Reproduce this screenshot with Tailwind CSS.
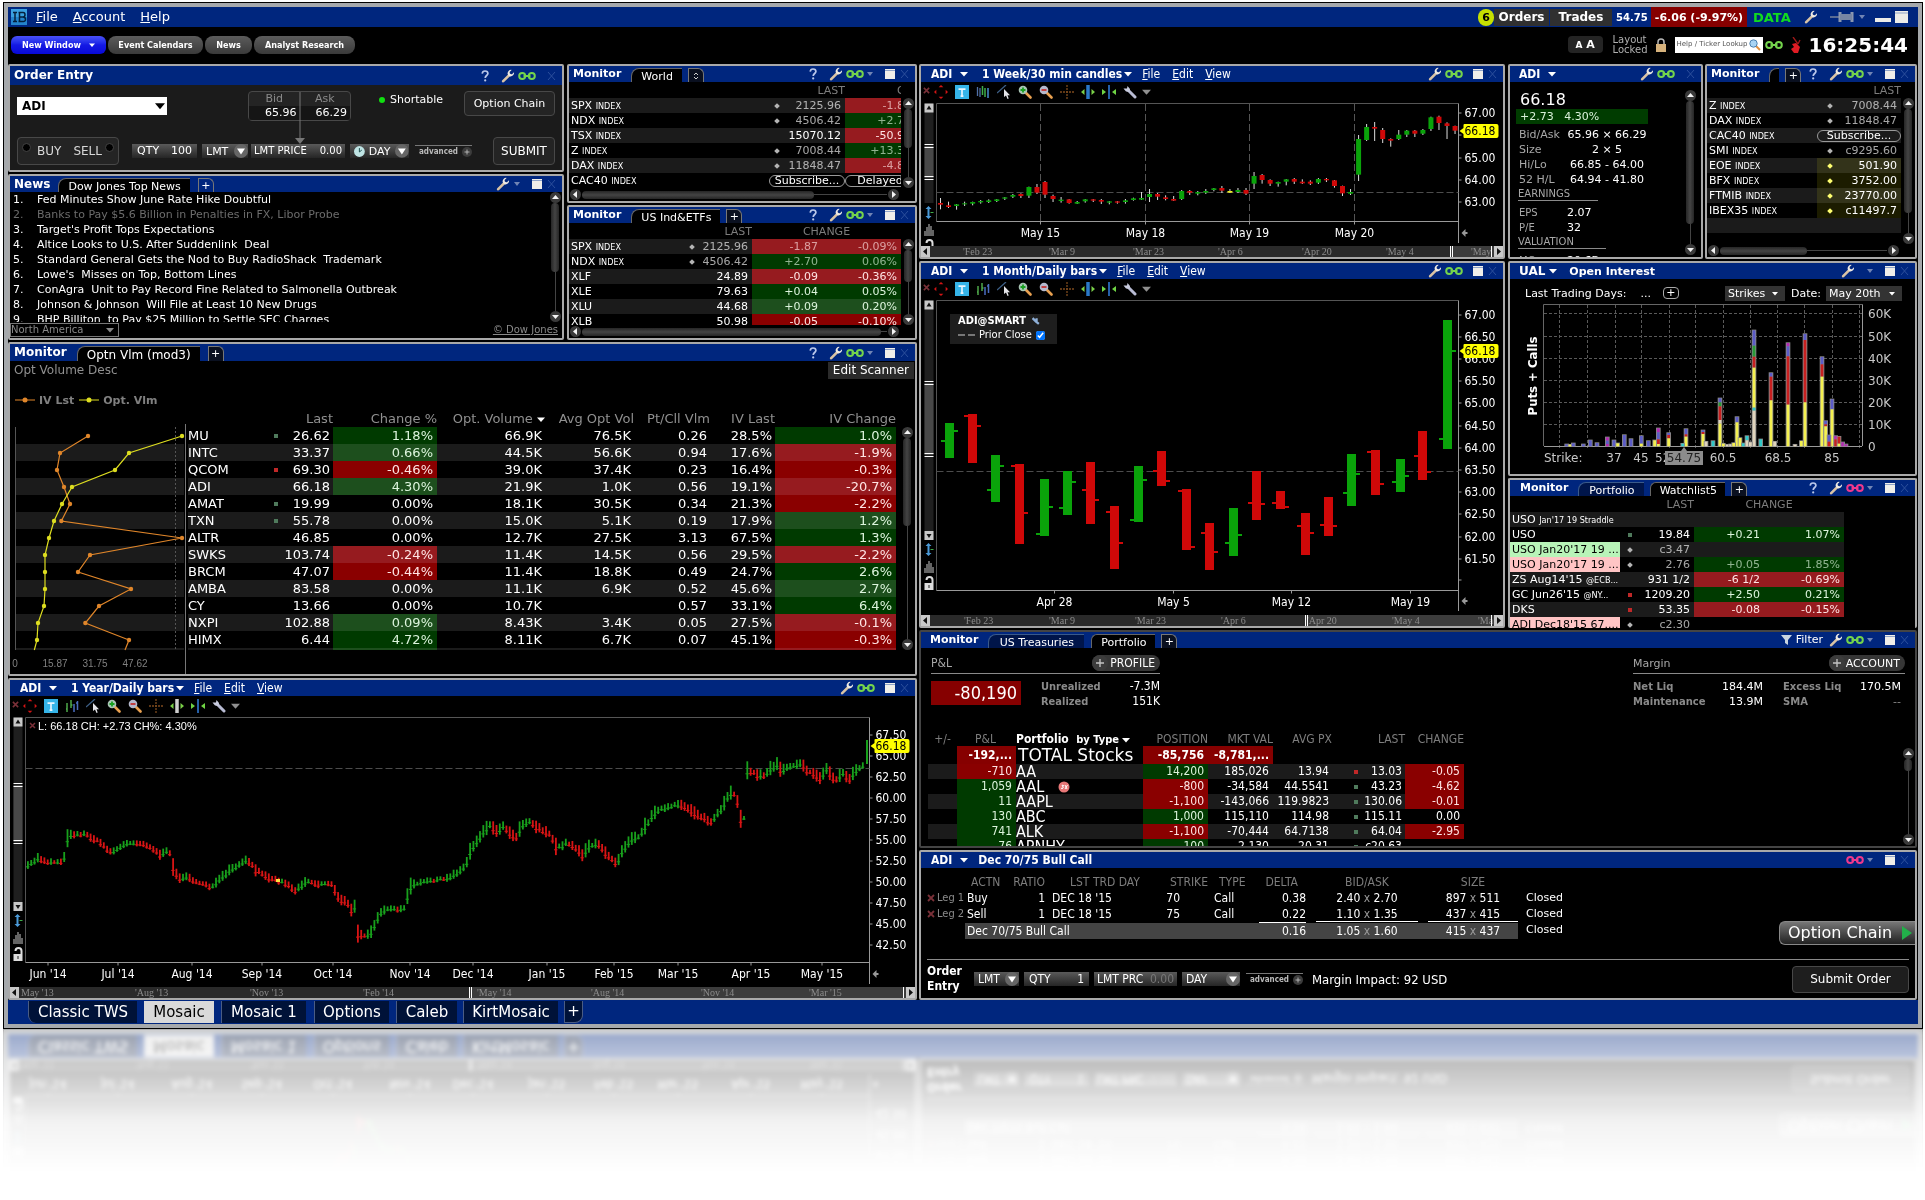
<!DOCTYPE html>
<html lang="en">
<head>
  <meta charset="UTF-8" />
  <meta name="viewport" content="width=device-width, initial-scale=1.0" />
  <title>Mosaic</title>
  <script src="https://cdn.jsdelivr.net/npm/@tailwindcss/browser@4"></script>
</head>
<body class="min-h-screen overflow-x-hidden bg-white pt-[2px] pr-[2px] pl-[3px] text-[11px] leading-[15px] text-white [font-family:'DejaVu_Sans',sans-serif]">

  <!-- ICONS -->
  <svg class="hidden">
    <symbol id="i-wrench" viewBox="0 0 14 14">
      <path d="M2.2 12.2 8.5 5.8" stroke="#d9c3a5" stroke-width="2.6" stroke-linecap="round" />
      <path d="M13 3.2 11 5.3 8.9 4.9 8.6 3 10.6.9A3.6 3.6 0 0 0 6.6 5 3.4 3.4 0 0 0 9 7.4 3.6 3.6 0 0 0 13 3.2z" fill="#eeeae4" />
    </symbol>
    <symbol id="i-link" viewBox="0 0 18 10">
      <circle cx="4.2" cy="5" r="3" fill="none" stroke="currentColor" stroke-width="2" />
      <circle cx="13.8" cy="5" r="3" fill="none" stroke="currentColor" stroke-width="2" />
      <path d="M5.5 5h7" stroke="currentColor" stroke-width="2" />
    </symbol>
    <symbol id="i-menu" viewBox="0 0 8 8"><path d="M1 2h6L4 6z" fill="#7185b5" /></symbol>
    <symbol id="i-max" viewBox="0 0 10 10"><path d="M0 0h10v10H0z" fill="#f0eeea" /><path d="M0 1.5h10" stroke="#8fa3c8" /></symbol>
    <symbol id="i-close" viewBox="0 0 10 10"><path d="M2 1l7 8M9 1 2 9" stroke="#2c4f9c" /></symbol>
    <symbol id="i-help" viewBox="0 0 10 12"><path d="M2.2 3.6C2.4 1.8 3.6 1 5 1c1.7 0 2.9 1 2.9 2.5C7.9 5.5 5.2 5.6 5.2 8" fill="none" stroke="#b9c7ea" stroke-width="1.7" /><circle cx="5.2" cy="10.4" r="1.1" fill="#b9c7ea" /></symbol>
    <symbol id="i-down" viewBox="0 0 8 6"><path d="M0 1h8L4 5.5z" fill="currentColor" /></symbol>
    <symbol id="i-x" viewBox="0 0 8 8"><path d="M1 1l6 6M7 1 1 7" stroke="#7a3038" stroke-width="1.8" /></symbol>
    <symbol id="i-move" viewBox="0 0 12 12"><path d="M6 0l2 2H4zM6 12l2-2H4zM0 6l2-2v4zM12 6l-2-2v4z" fill="#d41414" /></symbol>
    <symbol id="i-text" viewBox="0 0 12 12"><path d="M0 0h12v12H0z" fill="#35b4e8" /><path d="M3 3.5h6M6 3.5v6M4.8 9.5h2.4" stroke="#e8f6ff" stroke-width="1.4" /></symbol>
    <symbol id="i-bars" viewBox="0 0 14 14"><path d="M2 4v9M1 10h1M6 1v8M6 6h1.5" stroke="#4ea84a" stroke-width="1.5" /><path d="M9 5v8M12.5 2v9M11 4h1.5" stroke="#4a6cc0" stroke-width="1.5" /></symbol>
    <symbol id="i-bars2" viewBox="0 0 14 14"><path d="M1.5 2v9M4 3v9" stroke="#5070a8" stroke-width="1.3" /><path d="M6.5 1v9M9 3v9" stroke="#3fae4a" stroke-width="1.5" /><path d="M12 3v10" stroke="#4a8fd0" stroke-width="1.5" /></symbol>
    <symbol id="i-cursor" viewBox="0 0 14 14"><path d="M0 8 9 0" stroke="#3d5f86" stroke-width="1.3" /><path d="M7 4v8l2-1.5L10.5 14l1.2-.5-1.2-3.2H13z" fill="#e4e4e8" /></symbol>
    <symbol id="i-zin" viewBox="0 0 14 14"><path d="M8 8l4.5 4.5" stroke="#e8a050" stroke-width="2.6" stroke-linecap="round" /><circle cx="5" cy="5" r="4.3" fill="#a9c4b4" /><path d="M5 2.5v5M2.5 5h5" stroke="#18a020" stroke-width="1.8" /></symbol>
    <symbol id="i-zout" viewBox="0 0 14 14"><path d="M8 8l4.5 4.5" stroke="#e8a050" stroke-width="2.6" stroke-linecap="round" /><circle cx="5" cy="5" r="4.3" fill="#b4b8cc" /><path d="M2.5 5h5" stroke="#c43030" stroke-width="1.8" /></symbol>
    <symbol id="i-cross" viewBox="0 0 14 14"><path d="M7 0v14M0 7h14" stroke="#7d4a1c" stroke-width="1.3" stroke-dasharray="2 1" /></symbol>
    <symbol id="i-spread" viewBox="0 0 14 14"><path d="M7 0v14" stroke="currentColor" stroke-width="3.5" /><path d="M3.5 4v6L0 7zM10.5 4v6L14 7z" fill="#7ad048" /></symbol>
    <symbol id="i-squeeze" viewBox="0 0 14 14"><path d="M7 0v14" stroke="#2560a8" stroke-width="2" /><path d="M0 4v6l4-3zM14 4v6l-4-3z" fill="#6fd444" /></symbol>
    <symbol id="i-spanner" viewBox="0 0 14 14"><path d="M5 5l7 7" stroke="#b9bcd4" stroke-width="3" stroke-linecap="round" /><path d="M.5 3.5 3 6.5l3.5.5L7 4 4.5 1 4 3.5z" fill="#c9ccdf" /></symbol>
    <symbol id="i-up-circle" viewBox="0 0 11 11"><circle cx="5.5" cy="5.5" r="5.5" fill="#3a3a3a" /><path d="M5.5 3 9 7H2z" fill="#f4f4f4" /></symbol>
    <symbol id="i-drop" viewBox="0 0 14 14"><circle cx="7" cy="7" r="7" fill="#666" /><path d="M3 4.5h8L7 10.5z" fill="#fff" /></symbol>
    <symbol id="i-plus" viewBox="0 0 12 12"><circle cx="6" cy="6" r="6" fill="#3c3c3c" /><path d="M6 3v6M3 6h6" stroke="#c4c4c4" /></symbol>
  </svg>

  <div class="border border-black [-webkit-box-reflect:below_0px_linear-gradient(transparent_86%,rgba(0,0,0,0.05)_91%,rgba(0,0,0,0.26)_97%,rgba(0,0,0,0.42)_100%)]">
    <div class="border-4 border-[#a6a9ac] bg-black">

      <!-- TITLE BAR -->
      <header class="flex h-5 items-center bg-[#00267e] pl-[3px]">
        <svg class="h-4 w-4" viewBox="0 0 16 16"><path d="M0 0h16v16H0z" fill="#3aa0e0" /><path d="M0 8h16v8H0z" fill="#2484cc" /><path d="M2 3.5h4M4 3.5v9M2 12.5h4M8.5 3.5v9M7.5 3.5H12q2 0 2 2.200T12 8H9M12 8q2.500 0 2.500 2.300T12 12.500H7.500" fill="none" stroke="#04203c" stroke-width="1.5" /></svg>
        <nav class="ml-[9px] flex gap-[15px] text-[13px] leading-5">
          <button><u>F</u>ile</button>
          <button><u>A</u>ccount</button>
          <button><u>H</u>elp</button>
        </nav>
        <div class="ml-auto flex h-full items-center font-bold">
          <span class="z-10 flex h-[17px] w-4 items-center justify-center rounded-full bg-[#c6e000] text-black">6</span>
          <button class="h-[17px] w-[55px] bg-[#303030] text-[12px] leading-[17px]">Orders</button>
          <button class="ml-px h-[17px] w-[62px] bg-[#303030] text-[12px] leading-[17px]">Trades</button>
          <span class="ml-1 w-[35px] text-[10px]">54.75</span>
          <span class="flex h-full w-24 items-center justify-center bg-[#860000] text-[11px]">-6.06 (-9.97%)</span>
          <span class="ml-[6px] w-[51px] text-[13px] text-[#10dc20]">DATA</span>
          <svg class="h-[14px] w-[14px]"><use href="#i-wrench" /></svg>
          <svg class="ml-3 h-3 w-6" viewBox="0 0 24 12"><path d="M0 6h9" stroke="#5a6c94" stroke-width="2" /><path d="M10 1v10M22 1v10" stroke="#8b97b0" stroke-width="3" /><path d="M10 3h12v6H10z" fill="#7785a3" /></svg>
          <svg class="ml-1 h-2 w-2"><use href="#i-menu" /></svg>
          <span class="mt-[5px] ml-[9px] h-1 w-4 bg-[#ecece8]"></span>
          <svg class="mr-[10px] ml-1 h-3 w-[13px]" viewBox="0 0 13 12"><path d="M0 0h13v12H0z" fill="#ecece8" /><path d="M0 2h13" stroke="#8fa3c8" /></svg>
        </div>
      </header>

      <!-- TOOLBAR -->
      <div class="flex h-[37px] items-center pr-[10px] pb-[2px] pl-[3px]">
        <div class="flex gap-[2px] text-[9px] leading-[18px] font-bold [font-family:'DejaVu_Sans_Condensed','Noto_Sans',sans-serif]">
          <button class="flex h-[18px] w-[95px] items-center justify-center gap-2 rounded-md bg-linear-to-b from-[#4a50f8] via-[#1418e4] to-[#0808d8]">New Window <svg class="h-[6px] w-[6px]"><use href="#i-down" /></svg></button>
          <button class="h-[18px] w-[95px] rounded-lg bg-linear-to-b from-[#5c5c5c] to-[#3a3a3a]">Event Calendars</button>
          <button class="h-[18px] w-[47px] rounded-lg bg-linear-to-b from-[#5c5c5c] to-[#3a3a3a]">News</button>
          <button class="h-[18px] w-[101px] rounded-lg bg-linear-to-b from-[#5c5c5c] to-[#3a3a3a]">Analyst Research</button>
        </div>
        <div class="ml-auto flex items-center">
          <button class="h-[17px] w-[35px] rounded bg-[#242424] text-[11px] leading-[17px] font-bold"><span class="text-[9px]">A</span> A</button>
          <p class="ml-[10px] text-[10px] leading-[10px] text-[#b0b0b0]">Layout<br />Locked</p>
          <svg class="ml-2 h-[14px] w-[10px]" viewBox="0 0 10 14"><path d="M2 7V4a3 3 0 0 1 6 0v3" fill="none" stroke="#b8b8b8" stroke-width="1.5" /><path d="M0 6h10v8H0z" fill="#d6b27c" /></svg>
          <label class="ml-[9px] flex h-4 w-[88px] items-center bg-white">
            <input aria-label="Help / Ticker Lookup" placeholder="Help / Ticker Lookup" class="w-[74px] pl-[2px] text-[7px] text-black placeholder:text-[#555]" />
            <svg class="h-3 w-3" viewBox="0 0 12 12"><path d="M7 7l4 4" stroke="#e09040" stroke-width="2" /><circle cx="4.5" cy="4.5" r="3.7" fill="#a8d4f4" stroke="#4a80b0" /></svg>
          </label>
          <svg class="ml-[2px] h-[10px] w-[18px] text-[#74d44c]"><use href="#i-link" /></svg>
          <svg class="ml-2 h-4 w-[10px]" viewBox="0 0 10 16"><path d="M2 0l5 7M9 3 7 7" stroke="#a01818" stroke-width="1.3" /><path d="M1 7l4-1 4 4-2 6H3L0 12l3-2z" fill="#e01c24" /></svg>
          <time class="ml-2 text-[20px] leading-5 font-bold">16:25:44</time>
        </div>
      </div>

      <main class="grid grid-cols-[minmax(0,909fr)_minmax(0,998fr)] gap-[2px] pr-px">

        <!-- LEFT HALF -->
        <div class="flex flex-col gap-[2px]">
          <div class="grid grid-cols-[minmax(0,556fr)_minmax(0,350fr)] gap-x-[3px]">
            <div class="flex flex-col gap-[2px]">

              <!-- ORDER ENTRY -->
              <section class="rounded-xs border-2 border-[#a9a9a9]">
                <div class="flex h-[19px] items-center bg-[#00267e] pl-1">
                  <h2 class="text-[12px] font-bold">Order Entry</h2>
                  <div class="ml-auto" data-tools="help wrench link gap close"></div>
                </div>
                <div class="h-[85px] bg-[#1b1b1b] px-[7px] pt-[6px]">
                  <div class="flex items-start">
                    <label class="mt-[6px] flex h-[18px] w-[150px] items-center bg-white pr-[2px] text-black">
                      <select aria-label="Symbol" class="flex-1 appearance-none pl-[5px] text-[12px] font-bold"><option>ADI</option></select>
                      <svg class="h-2 w-[10px]" viewBox="0 0 8 6" preserveAspectRatio="none"><path d="M0 1h8L4 5.5z" /></svg>
                    </label>
                    <div class="relative ml-[81px] grid h-[30px] w-[103px] grid-cols-2 rounded border border-[#484848] bg-[#242424] text-center leading-[14px]">
                      <span class="text-[#8a8a8a]">Bid</span><span class="text-[#8a8a8a]">Ask</span>
                      <span class="bg-black/40 pr-[3px] text-right">65.96</span><span class="bg-black/40 pr-[3px] text-right">66.29</span>
                      <!-- price pointer down to the limit field -->
                      <svg class="absolute top-0 left-[46px] h-[52px] w-[10px]" viewBox="0 0 10 52"><path d="M5 0v48" stroke="#777" /><path d="M0 46h10l-5 6z" fill="#777" /></svg>
                    </div>
                    <p class="mt-px ml-[28px] flex items-center gap-[5px]"><i class="h-[6px] w-[6px] rounded-full bg-[#10e010]"></i>Shortable</p>
                    <button class="ml-auto h-[25px] w-[91px] rounded border border-[#484848] bg-[#242424]">Option Chain</button>
                  </div>
                  <div class="mt-4 flex items-center">
                    <div class="flex h-7 w-[102px] justify-between rounded border border-[#484848] bg-[#242424] px-1 text-[12px] text-[#d8d8d8]">
                      <label class="flex items-center gap-[6px]"><input type="radio" name="side" class="mb-2 h-[9px] w-[9px] appearance-none rounded-full border border-[#444] bg-black" />BUY</label>
                      <label class="flex items-center gap-[3px]">SELL<input type="radio" name="side" class="mb-2 h-[9px] w-[9px] appearance-none rounded-full border border-[#444] bg-black" /></label>
                    </div>
                    <label class="ml-[13px] flex h-[14px] w-[65px] justify-between bg-linear-to-b from-[#5a5a5a] to-[#262626] px-[5px] leading-[14px]">QTY <input value="100" class="w-7 text-right" /></label>
                    <label class="ml-[5px] flex h-[14px] w-[46px] items-center bg-linear-to-b from-[#5a5a5a] to-[#262626] pl-1">
                      <select aria-label="Order type" class="flex-1 appearance-none"><option>LMT</option></select>
                      <svg class="h-[14px] w-[14px]"><use href="#i-drop" /></svg>
                    </label>
                    <label class="ml-[3px] flex h-[14px] w-[94px] justify-between bg-linear-to-b from-[#5a5a5a] to-[#262626] px-[3px] text-[10px] leading-[14px]"><span>LMT PRICE</span><input value="0.00" class="w-7 text-right" /></label>
                    <label class="ml-[5px] flex h-[14px] w-[59px] items-center bg-linear-to-b from-[#5a5a5a] to-[#262626] pl-1">
                      <svg class="mr-1 h-[11px] w-[11px]" viewBox="0 0 11 11"><circle cx="5.5" cy="5.5" r="5.5" fill="#bfe4e4" /><path d="M5.5 2v4l2.5-2" fill="none" stroke="#205050" /></svg>
                      <select aria-label="Time in force" class="w-[27px] appearance-none"><option>DAY</option></select>
                      <svg class="h-[14px] w-[14px]"><use href="#i-drop" /></svg>
                    </label>
                    <button class="ml-[6px] flex items-center gap-1 border-t border-[#777] pl-1 text-[8px] leading-[12px] font-bold text-[#bbb] [font-family:'DejaVu_Sans_Condensed','Noto_Sans',sans-serif]">advanced<svg class="h-[10px] w-[10px]"><use href="#i-plus" /></svg></button>
                    <button class="ml-auto h-7 w-[62px] rounded border border-[#484848] bg-[#242424] text-[12px]">SUBMIT</button>
                  </div>
                </div>
              </section>

              <!-- NEWS -->
              <section class="rounded-xs border-2 border-[#a9a9a9]">
                <div class="flex h-4 items-end bg-[#00267e] pl-1">
                  <h2 class="mr-2 text-[12px] leading-4 font-bold">News</h2>
                  <button class="h-[14px] rounded-tl-lg border-t border-l border-[#666] bg-black px-[9px] leading-[15px]">Dow Jones Top News</button>
                  <button class="ml-2 h-[14px] w-4 rounded-tr-md border border-b-0 border-[#777] leading-3">+</button>
                  <div class="ml-auto" data-tools="wrench menu max close"></div>
                </div>
                <div class="flex h-[130px] overflow-hidden">
                  <ol id="news" class="flex-1 pl-[3px]"></ol>
                  <div data-vscroll="64"></div>
                </div>
                <div class="flex h-4 items-center justify-between pr-1 text-[10px] text-[#8a8a8a]">
                  <label class="flex h-[14px] w-[109px] items-center border border-[#777] pr-1">
                    <select aria-label="Region" class="flex-1 appearance-none leading-3"><option>North America</option></select>
                    <svg class="h-[6px] w-2"><use href="#i-down" /></svg>
                  </label>
                  <a href="#" class="leading-[14px] underline">© Dow Jones</a>
                </div>
              </section>
            </div>

            <div class="flex flex-col gap-[2px]">

              <!-- WORLD MONITOR -->
              <section class="rounded-xs border-2 border-[#a9a9a9]">
                <div class="flex h-4 items-end bg-[#00267e] pl-1">
                  <h2 class="mr-[10px] leading-4 font-bold">Monitor</h2>
                  <button class="h-[14px] rounded-tl-lg border-t border-l border-[#666] bg-black px-[9px] leading-[15px]">World</button>
                  <button aria-label="More tabs" class="ml-[6px] flex h-[14px] w-4 items-center justify-center rounded-tr-md border border-b-0 border-[#777] bg-[#0a1020]"><svg class="h-2 w-1" viewBox="0 0 4 8"><path d="M0 3l2-2 2 2M0 5l2 2 2-2" fill="none" stroke="#ccc" /></svg></button>
                  <div class="ml-auto" data-tools="help wrench link menu max close"></div>
                </div>
                <div class="flex h-[106px]">
                  <div class="flex-1 overflow-hidden">
                    <table class="w-[calc(100%+14px)] table-fixed">
                      <colgroup><col /><col class="w-4" /><col class="w-[60px]" /><col class="w-[70px]" /></colgroup>
                      <thead><tr class="h-4 text-right text-[#7d7d7d]"><th></th><th></th><th class="font-normal">LAST</th><th class="pl-[52px] text-left font-normal">CHANGE</th></tr></thead>
                      <tbody id="world"></tbody>
                    </table>
                  </div>
                  <div class="mt-4 flex" data-vscroll="58"></div>
                </div>
                <div class="pr-3" data-hscroll="76"></div>
              </section>

              <!-- US MONITOR -->
              <section class="rounded-xs border-2 border-[#a9a9a9]">
                <div class="flex h-4 items-end bg-[#00267e] pl-1">
                  <h2 class="mr-[10px] leading-4 font-bold">Monitor</h2>
                  <button class="h-[14px] rounded-tl-lg border-t border-l border-[#666] bg-black px-[9px] leading-[15px]">US Ind&amp;ETFs</button>
                  <button class="ml-[6px] h-[14px] w-4 rounded-tr-md border border-b-0 border-[#777] bg-[#0a1020] leading-3">+</button>
                  <div class="ml-auto" data-tools="help wrench link menu max close"></div>
                </div>
                <div class="flex h-[102px] overflow-hidden">
                  <table class="h-fit w-full min-w-0 flex-1 table-fixed">
                    <colgroup><col /><col class="w-4" /><col class="w-[52px]" /><col class="w-[70px]" /><col class="w-[79px]" /></colgroup>
                    <thead><tr class="h-4 text-right text-[#7d7d7d]"><th></th><th></th><th class="font-normal">LAST</th><th colspan="2" class="text-center font-normal">CHANGE</th></tr></thead>
                    <tbody id="us"></tbody>
                  </table>
                  <div class="mt-4 flex" data-vscroll="50"></div>
                </div>
                <div class="pr-3" data-hscroll="98"></div>
              </section>
            </div>
          </div>

          <!-- OPTION VOLUME SCANNER -->
          <section class="rounded-xs border-2 border-[#a9a9a9]">
            <div class="flex h-[17px] items-end bg-[#00267e] pl-1">
              <h2 class="mr-[10px] text-[12px] leading-[17px] font-bold">Monitor</h2>
              <button class="h-[15px] rounded-tl-lg border-t border-l border-[#666] bg-black px-[9px] text-[12px] leading-4">Optn Vlm (mod3)</button>
              <button class="ml-2 h-[15px] w-4 rounded-tr-md border border-b-0 border-[#777] bg-[#0a1020] leading-3">+</button>
              <div class="ml-auto" data-tools="help wrench link menu max close"></div>
            </div>
            <div class="flex h-[29px] items-start justify-between pr-px pl-1 text-[12px]">
              <p class="mt-[2px] text-[#909090]">Opt Volume Desc</p>
              <button class="mt-px h-[17px] bg-[#2b2b2b] px-[5px] text-[12px] leading-[17px]">Edit Scanner</button>
            </div>
            <div class="flex h-5 items-center pl-[5px] font-bold text-[#808080]">
              <svg class="mr-1 h-[6px] w-5" viewBox="0 0 20 6"><path d="M0 3h20" stroke="#e0862a" /><circle cx="10" cy="3" r="2.5" fill="#e0862a" /></svg>IV Lst
              <svg class="mr-1 ml-[5px] h-[6px] w-5" viewBox="0 0 20 6"><path d="M0 3h20" stroke="#dede20" /><circle cx="10" cy="3" r="2.5" fill="#dede20" /></svg>Opt. Vlm
            </div>
            <div class="flex h-[264px] items-start">
              <svg id="scanChart" class="h-[264px] w-[178px] shrink-0 text-[10px] [font-family:'Liberation_Sans',sans-serif]" viewBox="10 411 178 264"></svg>
              <table class="w-full min-w-0 flex-1 table-fixed text-[13px] leading-[17px]">
                <colgroup><col class="w-[80px]" /><col class="w-4" /><col /><col class="w-[104px]" /><col class="w-[108px]" /><col class="w-[89px]" /><col class="w-[76px]" /><col class="w-[65px]" /><col class="w-[121px]" /></colgroup>
                <thead>
                  <tr class="h-[17px] text-right text-[13px] whitespace-nowrap text-[#909090]">
                    <th></th><th></th><th class="font-normal">Last</th><th class="font-normal">Change %</th>
                    <th class="font-normal">Opt. Volume <svg class="mb-px inline h-[7px] w-2 text-white"><use href="#i-down" /></svg></th>
                    <th class="font-normal">Avg Opt Vol</th><th class="font-normal">Pt/Cll Vlm</th><th class="font-normal">IV Last</th><th class="font-normal">IV Change</th>
                  </tr>
                </thead>
                <tbody id="scan"></tbody>
              </table>
              <div class="mt-[17px] mr-px ml-1 flex h-[223px]" data-vscroll="44"></div>
            </div>
          </section>

          <!-- 1 YEAR CHART -->
          <section class="rounded-xs border-2 border-[#a9a9a9]">
            <div data-chart-head="1 Year/Daily bars"></div>
            <svg id="yearChart" class="w-full text-[12px] [font-family:'DejaVu_Sans_Condensed','Noto_Sans',sans-serif]" viewBox="10 716 905 282"></svg>
          </section>
        </div>

        <!-- RIGHT HALF -->
        <div class="flex flex-col gap-[2px]">
          <div class="grid grid-cols-[minmax(0,586fr)_minmax(0,409fr)] gap-x-[3px]">
            <div class="flex flex-col gap-[2px]">
              <section class="rounded-xs border-2 border-[#a9a9a9]">
                <div data-chart-head="1 Week/30 min candles"></div>
                <svg id="weekChart" class="w-full text-[12px] [font-family:'DejaVu_Sans_Condensed','Noto_Sans',sans-serif]" viewBox="921 102 582 155"></svg>
              </section>
              <section class="rounded-xs border-2 border-[#a9a9a9]">
                <div data-chart-head="1 Month/Daily bars"></div>
                <div class="relative">
                  <svg id="monthChart" class="w-full text-[12px] [font-family:'DejaVu_Sans_Condensed','Noto_Sans',sans-serif]" viewBox="921 299 582 327"></svg>
                  <div class="absolute top-[15px] left-[29px] h-[30px] w-[107px] bg-[#1e1e1e] pl-2 leading-[14px] [font-family:'DejaVu_Sans_Condensed','Noto_Sans',sans-serif]">
                    <p class="flex items-center gap-[6px] font-bold">ADI@SMART <svg class="h-2 w-2" viewBox="0 0 14 14"><path d="M1 2l6 6 5 4M8 2v7" stroke="#8fb0d8" stroke-width="4" /></svg></p>
                    <label class="flex items-center gap-1"><svg class="h-[2px] w-[17px]" viewBox="0 0 17 2"><path d="M0 1h7M10 1h7" stroke="#777" stroke-width="2" /></svg>Prior Close <input type="checkbox" checked class="h-[9px] w-[9px]" /></label>
                  </div>
                </div>
              </section>
            </div>

            <div class="flex flex-col gap-[2px]">
              <div class="grid grid-cols-[minmax(0,195fr)_minmax(0,212fr)] gap-x-[2px]">

                <!-- ADI QUOTE -->
                <section class="rounded-xs border-2 border-[#a9a9a9]">
                  <div class="flex h-4 items-center bg-[#00267e] pl-[9px] text-[12px] font-bold [font-family:'DejaVu_Sans_Condensed','Noto_Sans',sans-serif]">
                    <button class="flex items-center gap-2">ADI <svg class="h-[6px] w-2"><use href="#i-down" /></svg></button>
                    <div class="ml-auto" data-tools="wrench link gap close"></div>
                  </div>
                  <div class="flex h-[175px] pt-2">
                    <div class="flex-1 overflow-hidden pl-[6px]">
                      <p class="pl-1 text-[16px] leading-[19px]">66.18</p>
                      <p class="h-[15px] w-[132px] bg-[#003c00] pl-1 whitespace-pre text-[#d8f0d8]">+2.73   4.30%</p>
                      <dl id="quote" class="mt-[3px] grid grid-cols-[48px_80px] pl-[3px] leading-[15px] whitespace-nowrap"></dl>
                      <h3 class="ml-[2px] w-20 border-b border-[#8a8a8a] text-[10px] leading-[13px] text-[#a8a8a8]">EARNINGS</h3>
                      <dl class="mt-1 grid grid-cols-[48px_80px] pl-[3px] leading-[15px]">
                        <dt class="text-[10px] text-[#a8a8a8]">EPS</dt><dd>2.07</dd>
                        <dt class="text-[10px] text-[#a8a8a8]">P/E</dt><dd>32</dd>
                      </dl>
                      <h3 class="ml-[2px] w-[88px] border-b border-[#8a8a8a] text-[10px] leading-[13px] text-[#a8a8a8]">VALUATION</h3>
                      <dl class="mt-1 grid grid-cols-[48px_80px] pl-[3px] leading-[15px]"><dt class="text-[10px] text-[#a8a8a8]">MC</dt><dd>20.6B</dd></dl>
                    </div>
                    <div class="mr-1 flex pb-[2px]" data-vscroll="86"></div>
                  </div>
                </section>

                <!-- INDEX MONITOR -->
                <section class="rounded-xs border-2 border-[#a9a9a9]">
                  <div class="flex h-4 items-end bg-[#00267e] pl-1">
                    <h2 class="mr-[10px] leading-4 font-bold">Monitor</h2>
                    <button aria-label="Tab" class="h-[14px] w-[10px] rounded-tl-lg border-t border-l border-[#666] bg-black"></button>
                    <button class="ml-[6px] h-[14px] w-4 rounded-tr-md border border-b-0 border-[#777] bg-[#0a1020] leading-3">+</button>
                    <div class="ml-auto" data-tools="help wrench link menu max close"></div>
                  </div>
                  <div class="flex h-[162px]">
                    <table class="h-fit w-full min-w-0 flex-1 table-fixed">
                      <colgroup><col /><col class="w-[26px]" /><col class="w-[58px]" /></colgroup>
                      <thead><tr class="h-4 text-right text-[#7d7d7d]"><th></th><th></th><th class="font-normal">LAST</th></tr></thead>
                      <tbody id="idx"></tbody>
                    </table>
                    <div class="mt-4 flex" data-vscroll="84"></div>
                  </div>
                  <div class="pr-3" data-hscroll="52"></div>
                </section>
              </div>

              <!-- OPEN INTEREST -->
              <section class="rounded-xs border-2 border-[#a9a9a9]">
                <div class="flex h-4 items-center bg-[#00267e] pl-[9px]">
                  <button class="mr-3 flex items-center gap-1 text-[12px] font-bold">UAL <svg class="h-[6px] w-2"><use href="#i-down" /></svg></button>
                  <h2 class="text-[11px] font-bold">Open Interest</h2>
                  <div class="ml-auto" data-tools="wrench gap menu max close"></div>
                </div>
                <div class="flex h-6 items-center pt-1 pr-[13px] pl-[15px]">
                  <span>Last Trading Days:</span><span class="ml-[14px]">...</span>
                  <button class="ml-3 h-3 w-4 rounded border border-[#aaa] leading-[10px]">+</button>
                  <label class="ml-auto flex h-[15px] items-center gap-[6px] bg-[#333] px-[3px]"><select aria-label="View by" class="appearance-none"><option>Strikes</option></select><svg class="mr-1 h-[5px] w-[6px]"><use href="#i-down" /></svg></label>
                  <label class="ml-[6px] flex items-center gap-[5px]">Date: <span class="flex h-[15px] items-center gap-2 bg-[#333] px-[3px]"><select class="appearance-none"><option>May 20th</option></select><svg class="mr-1 h-[5px] w-[6px]"><use href="#i-down" /></svg></span></label>
                </div>
                <svg id="oiChart" class="w-full text-[12px]" viewBox="1510 303 405 171"></svg>
              </section>

              <!-- WATCHLIST -->
              <section class="h-[150px] overflow-hidden rounded-xs border-2 border-b-0 border-[#a9a9a9]">
                <div class="flex h-4 items-end bg-[#00267e] pl-[10px]">
                  <h2 class="mr-[10px] leading-4 font-bold">Monitor</h2>
                  <button class="h-[14px] w-[66px] rounded-tl-lg border-t border-l border-[#3a5a8a] bg-[#00154a] leading-[15px]">Portfolio</button>
                  <button class="ml-[6px] h-[14px] w-[75px] rounded-tl-md border-t border-l border-[#666] bg-black leading-[15px]">Watchlist5</button>
                  <button class="ml-[6px] h-[14px] w-4 rounded-tr-md border border-b-0 border-[#777] bg-[#0a1020] leading-3">+</button>
                  <div class="ml-auto text-[#f0388c]" data-tools="help wrench link menu max close"></div>
                </div>
                <table class="mr-[71px] w-[calc(100%-71px)] table-fixed">
                  <colgroup><col class="w-[110px]" /><col /><col class="w-[54px]" /><col class="w-[70px]" /><col class="w-20" /></colgroup>
                  <thead><tr class="h-4 text-right text-[#7d7d7d]"><th></th><th></th><th class="font-normal">LAST</th><th colspan="2" class="text-center font-normal">CHANGE</th></tr></thead>
                  <tbody id="watch"></tbody>
                </table>
              </section>
            </div>
          </div>

          <!-- PORTFOLIO -->
          <section class="rounded-xs border-2 border-[#444] [font-family:'DejaVu_Sans_Condensed','Noto_Sans',sans-serif]">
            <div class="flex h-4 items-end bg-[#00267e] pl-[9px] [font-family:'DejaVu_Sans',sans-serif]">
              <h2 class="mr-[10px] leading-4 font-bold">Monitor</h2>
              <button class="h-[14px] w-[96px] rounded-tl-lg border-t border-l border-[#3a5a8a] bg-[#00154a] leading-[15px]">US Treasuries</button>
              <button class="ml-[7px] h-[14px] w-[64px] rounded-tl-md border-t border-l border-[#666] bg-black leading-[15px]">Portfolio</button>
              <button class="ml-[6px] h-[14px] w-4 rounded-tr-md border border-b-0 border-[#777] bg-[#0a1020] leading-3">+</button>
              <button class="ml-auto flex items-center gap-1 leading-4"><svg class="h-[10px] w-[11px]" viewBox="0 0 11 10"><path d="M0 0h11L7 5v5L4 8V5z" fill="#c8d4e0" /></svg>Filter</button>
              <div class="ml-[6px]" data-tools="wrench link menu max close"></div>
            </div>
            <div class="flex h-[85px] justify-between pt-[7px] pr-[10px] pl-[10px]">
              <div class="w-[229px]">
                <div class="flex h-[19px] items-center justify-between border-b border-[#8a8a8a] pb-[2px]">
                  <span class="text-[12px] text-[#a8a8a8]">P&amp;L</span>
                  <button class="flex items-center gap-[2px] rounded-lg bg-[#363636] pr-[5px] text-[12px] leading-[15px]"><svg class="h-4 w-4"><use href="#i-plus" /></svg>PROFILE</button>
                </div>
                <div class="mt-[5px] flex justify-between">
                  <output class="mt-[2px] h-6 w-[90px] bg-[#860000] pr-1 text-right text-[18px] leading-6">-80,190</output>
                  <dl class="grid w-[119px] grid-cols-2 text-[12px] leading-[15px]">
                    <dt class="text-[11px] font-bold text-[#8a8a8a]">Unrealized</dt><dd class="text-right">-7.3M</dd>
                    <dt class="text-[11px] font-bold text-[#8a8a8a]">Realized</dt><dd class="text-right">151K</dd>
                  </dl>
                </div>
              </div>
              <div class="w-[272px] text-[11px] [font-family:'DejaVu_Sans',sans-serif]">
                <div class="flex h-[19px] items-center justify-between border-b border-[#8a8a8a] pb-[2px]">
                  <span class="text-[#a8a8a8]">Margin</span>
                  <button class="flex items-center gap-px rounded-lg bg-[#363636] pr-[5px] leading-[15px]"><svg class="h-4 w-4"><use href="#i-plus" /></svg>ACCOUNT</button>
                </div>
                <dl class="mt-[5px] grid grid-cols-[80px_50px_85px_53px] leading-[15px]">
                  <dt class="text-[10px] font-bold text-[#8a8a8a]">Net Liq</dt><dd class="text-right">184.4M</dd><dt class="pl-5 text-[10px] font-bold whitespace-nowrap text-[#8a8a8a]">Excess Liq</dt><dd class="text-right">170.5M</dd>
                  <dt class="text-[10px] font-bold text-[#8a8a8a]">Maintenance</dt><dd class="text-right">13.9M</dd><dt class="pl-5 text-[10px] font-bold text-[#8a8a8a]">SMA</dt><dd class="text-right text-[#8a8a8a]">--</dd>
                </dl>
              </div>
            </div>
            <div class="flex h-[113px] overflow-hidden">
              <table class="ml-[7px] h-fit w-[536px] table-fixed text-[12px]">
                <colgroup><col class="w-[29px]" /><col class="w-[59px]" /><col class="w-[127px]" /><col class="w-[65px]" /><col class="w-[65px]" /><col class="w-[59px]" /><col class="w-7" /><col class="w-[45px]" /><col class="w-[59px]" /></colgroup>
                <thead>
                  <tr class="h-[13px] text-right leading-[13px] whitespace-nowrap text-[#7d7d7d]">
                    <th class="text-center font-normal">+/-</th><th class="pr-5 font-normal">P&amp;L</th>
                    <th class="text-left text-white">Portfolio &nbsp;<button class="text-[11px]">by Type <svg class="inline h-[6px] w-2"><use href="#i-down" /></svg></button></th>
                    <th class="font-normal">POSITION</th><th class="font-normal">MKT VAL</th><th class="font-normal">AVG PX</th><th></th><th class="font-normal">LAST</th><th class="font-normal">CHANGE</th>
                  </tr>
                </thead>
                <tbody id="pf"></tbody>
              </table>
              <div class="mt-[15px] ml-auto flex pb-px" data-vscroll="16"></div>
            </div>
          </section>

          <!-- SPREAD TICKET -->
          <section class="rounded-xs border-2 border-[#a9a9a9] [font-family:'DejaVu_Sans_Condensed','Noto_Sans',sans-serif]">
            <div class="flex h-4 items-center bg-[#00267e] pl-[10px] text-[12px] font-bold">
              <button class="flex items-center gap-2">ADI <svg class="h-[6px] w-2"><use href="#i-down" /></svg></button>
              <h2 class="ml-[10px]">Dec 70/75 Bull Call</h2>
              <div class="ml-auto text-[#f0388c]" data-tools="link menu max close"></div>
            </div>
            <div class="flex h-[91px] justify-between pt-[6px]">
              <div class="flex">
                <table class="ml-[6px] h-fit w-[591px] table-fixed text-[12px] leading-4">
                  <colgroup><col class="w-[38px]" /><col class="w-[42px]" /><col class="w-[38px]" /><col class="w-[99px]" /><col class="w-[64px]" /><col class="w-[51px]" /><col class="w-[47px]" /><col class="w-[122px]" /><col class="w-[90px]" /></colgroup>
                  <thead>
                    <tr class="h-4 whitespace-nowrap text-[#7d7d7d]">
                      <th></th><th class="pl-[6px] text-left font-normal">ACTN</th><th class="text-right font-normal">RATIO</th><th class="pl-[25px] text-left font-normal">LST TRD DAY</th><th class="text-right font-normal">STRIKE</th><th class="pl-[11px] text-left font-normal">TYPE</th><th class="pr-2 text-right font-normal">DELTA</th><th class="text-center font-normal">BID/ASK</th><th class="text-center font-normal">SIZE</th>
                    </tr>
                  </thead>
                  <tbody id="legs"></tbody>
                </table>
                <div class="mt-4 ml-2 text-[11px] leading-4 [font-family:'DejaVu_Sans',sans-serif]"><p>Closed</p><p>Closed</p><p>Closed</p></div>
              </div>
              <button class="mt-[47px] flex h-6 w-[136px] items-center justify-between rounded-l-md border border-r-0 border-[#888] bg-linear-to-b from-[#777] to-[#222] pr-[3px] pl-2 text-[16px] leading-5 [font-family:'DejaVu_Sans',sans-serif]">Option Chain <svg class="h-[14px] w-[10px]" viewBox="0 0 10 14"><path d="M0 0l10 7-10 7z" fill="#22b04a" /></svg></button>
            </div>
            <div class="mx-[6px] flex h-[39px] items-center border-t border-[#8a8a8a]">
              <h3 class="w-[47px] text-[12px] leading-[15px] font-bold">Order<br />Entry</h3>
              <label class="flex h-[14px] w-[45px] items-center bg-linear-to-b from-[#5a5a5a] to-[#262626] pl-1 text-[12px]">
                <select aria-label="Order type" class="w-[27px] appearance-none"><option>LMT</option></select><svg class="h-[14px] w-[14px]"><use href="#i-drop" /></svg>
              </label>
              <label class="ml-[5px] flex h-[14px] w-[65px] justify-between bg-linear-to-b from-[#5a5a5a] to-[#262626] px-[5px] text-[12px] leading-[14px]">QTY <input value="1" class="w-6 text-right" /></label>
              <label class="ml-[5px] flex h-[14px] w-[83px] justify-between bg-linear-to-b from-[#5a5a5a] to-[#262626] px-[3px] text-[12px] leading-[14px]"><span>LMT PRC</span><input value="0.00" class="w-[26px] text-right text-[#777]" /></label>
              <label class="ml-[5px] flex h-[14px] w-[58px] items-center bg-linear-to-b from-[#5a5a5a] to-[#262626] pl-1 text-[12px]">
                <select aria-label="Time in force" class="w-10 appearance-none"><option>DAY</option></select><svg class="h-[14px] w-[14px]"><use href="#i-drop" /></svg>
              </label>
              <button class="ml-[6px] flex items-center gap-1 border-t border-[#777] pl-1 text-[8px] leading-[12px] font-bold text-[#bbb]">advanced<svg class="h-[10px] w-[10px]"><use href="#i-plus" /></svg></button>
              <p class="ml-[9px] text-[13px]">Margin Impact: 92 USD</p>
              <button class="ml-auto h-[27px] w-[117px] rounded border border-[#484848] bg-[#1e1e1e] text-[12px] [font-family:'DejaVu_Sans',sans-serif]">Submit Order</button>
            </div>
          </section>
        </div>
      </main>

      <!-- WORKSPACE TABS -->
      <nav class="flex h-6 items-start bg-[#00267e] pt-px pl-5 text-[15px] leading-[21px]">
        <button class="mr-[7px] h-[22px] w-[109px] rounded-bl-lg border-l border-[#4a5c84] bg-[#001238]">Classic TWS</button>
        <button class="mr-[7px] h-[22px] w-[70px] bg-[#d9d9d9] text-black">Mosaic</button>
        <button class="mr-2 h-[22px] w-[85px] border-l border-[#4a5c84] bg-[#001238]">Mosaic 1</button>
        <button class="mr-[7px] h-[22px] w-[75px] border-l border-[#4a5c84] bg-[#001238]">Options</button>
        <button class="mr-[6px] h-[22px] w-[61px] border-l border-[#4a5c84] bg-[#001238]">Caleb</button>
        <button class="mr-[6px] h-[22px] w-[95px] border-l border-[#4a5c84] bg-[#001238]">KirtMosaic</button>
        <button class="h-[22px] w-[19px] rounded-br-lg border-x border-b border-[#4a5c84] bg-[#001238]">+</button>
      </nav>
    </div>
  </div>
  <!-- softens the mirrored window -->
  <div class="h-[168px] backdrop-blur-[2px]"></div>

  <script>
    const $ = (id) => document.getElementById(id);

    // Header tool icons
    const TOOLS = {
      help: '<svg class="mr-[11px] h-3 w-[10px]"><use href="#i-help"/></svg>',
      wrench: '<svg class="mr-[3px] h-[14px] w-[14px]"><use href="#i-wrench"/></svg>',
      link: '<svg class="mr-[2px] h-[10px] w-[18px]"><use href="#i-link"/></svg>',
      menu: '<svg class="mr-[11px] h-2 w-2"><use href="#i-menu"/></svg>',
      max: '<svg class="mr-1 h-[10px] w-[10px]"><use href="#i-max"/></svg>',
      close: '<svg class="h-[10px] w-[10px]"><use href="#i-close"/></svg>',
      gap: '<span class="w-2"></span>',
    };
    const tools = (list) => list.split(' ').map((t) => TOOLS[t]).join('');

    // Chart headers with menu and drawing toolbar
    const DRAW = ['i-move', 'i-text', 'i-bars', 'i-cursor', 'i-zin', 'i-zout', 'i-cross', 'i-spread', 'i-squeeze', 'i-spanner'];
    document.querySelectorAll('[data-chart-head]').forEach((el) => {
      const title = el.dataset.chartHead;
      const icons = DRAW.map((id) => {
        const ref = id === 'i-bars' && title.startsWith('1 Week') ? 'i-bars2' : id;
        const tint = title.startsWith('1 Year') ? 'text-[#d0d0d0]' : 'text-[#2a78c8]';
        return `<button aria-label="${id.slice(2)}" class="flex w-[21px] justify-center ${tint}"><svg class="h-[14px] w-[14px]"><use href="#${ref}"/></svg></button>`;
      }).join('');
      el.innerHTML = `
        <div class="flex h-4 items-center bg-[#00267e] pl-[10px] text-[12px] [font-family:'DejaVu_Sans_Condensed','Noto_Sans',sans-serif]">
          <button class="mr-[13px] flex w-[38px] items-center gap-2 font-bold">ADI <svg class="h-[6px] w-2"><use href="#i-down"/></svg></button>
          <button class="mr-[10px] flex items-center gap-[2px] font-bold">${title} <svg class="h-[6px] w-2"><use href="#i-down"/></svg></button>
          <button class="mr-3"><u>F</u>ile</button><button class="mr-3"><u>E</u>dit</button><button><u>V</u>iew</button>
          <div class="ml-auto" data-tools="wrench link gap max close"></div>
        </div>
        <div class="flex h-5 items-center pl-[2px]">
          <svg class="mb-1 h-[7px] w-[7px]"><use href="#i-x"/></svg>${icons}
          <svg class="ml-[2px] h-2 w-[9px] text-[#909090]"><use href="#i-down"/></svg>
        </div>`;
    });
    document.querySelectorAll('[data-tools]').forEach((el) => {
      el.innerHTML = `<div class="flex h-4 items-center pr-[6px]">${tools(el.dataset.tools)}</div>`;
      if (!el.className.includes('#f0388c')) el.classList.add('text-[#74d44c]');
    });

    // Scrollbars: the value is the thumb length in percent
    document.querySelectorAll('[data-vscroll]').forEach((el) => {
      el.innerHTML = `<div class="flex h-full w-[14px] flex-col items-center">
        <svg class="h-[11px] w-[11px] shrink-0"><use href="#i-up-circle"/></svg>
        <div class="flex w-full flex-1 flex-col items-center">
          <div class="w-2 rounded-full bg-linear-to-r from-[#262626] via-[#444] to-[#262626]" style="height:${el.dataset.vscroll}%"></div>
          <div class="w-px flex-1 bg-[#444]"></div>
        </div>
        <svg class="h-[11px] w-[11px] shrink-0 rotate-180"><use href="#i-up-circle"/></svg></div>`;
    });
    document.querySelectorAll('[data-hscroll]').forEach((el) => {
      el.innerHTML = `<div class="flex h-[13px] w-full items-center px-px">
        <svg class="h-[11px] w-[11px] shrink-0 -rotate-90"><use href="#i-up-circle"/></svg>
        <div class="flex flex-1 items-center px-px">
          <div class="h-2 rounded-full bg-linear-to-b from-[#262626] via-[#444] to-[#262626]" style="width:${el.dataset.hscroll}%"></div>
          <div class="h-px flex-1 bg-[#444]"></div>
        </div>
        <svg class="mr-[3px] h-[11px] w-[11px] shrink-0 rotate-90"><use href="#i-up-circle"/></svg></div>`;
    });

    // News
    const news = [
      'Fed Minutes Show June Rate Hike Doubtful', 'Banks to Pay $5.6 Billion in Penalties in FX, Libor Probe',
      "Target's Profit Tops Expectations", 'Altice Looks to U.S. After Suddenlink  Deal',
      'Standard General Gets the Nod to Buy RadioShack  Trademark', "Lowe's  Misses on Top, Bottom Lines",
      'ConAgra  Unit to Pay Record Fine Related to Salmonella Outbreak', 'Johnson & Johnson  Will File at Least 10 New Drugs',
      'BHP Billiton  to Pay $25 Million to Settle SEC Charges',
    ];
    $('news').innerHTML = news.map((t, i) =>
      `<li class="flex h-[15px] whitespace-pre ${i === 1 ? 'text-[#6c6c6c]' : ''}"><span class="w-6">${i + 1}.</span>${t.replace('&', '&amp;')}</li>`).join('');

    $('quote').innerHTML = [['Bid/Ask', '65.96 × 66.29'], ['Size', '2 × 5'], ['Hi/Lo', '66.85 - 64.00'], ['52 H/L', '64.94 - 41.80']]
      .map(([k, v]) => `<dt class="text-[#a8a8a8]">${k}</dt><dd class="text-center">${v}</dd>`).join('');

    // Monitor rows: [symbol, suffix, mark, last, change, pct, dim, label]
    const stripe = (i) => (i % 2 ? 'bg-black' : 'bg-[#1b1b1b]');
    const tone = (v, alt) => {
      if (!v) return '';
      if (v.startsWith('-')) return alt ? 'bg-[#961b1f] text-[#ffe4e4]' : 'bg-[#8a0000] text-[#ffe4e4]';
      return alt ? 'bg-[#1d4f1d] text-[#dcf4dc]' : 'bg-[#003a00] text-[#dcf4dc]';
    };
    const mark = (m) => {
      if (m === 'd') return '<i class="mx-auto block h-1 w-1 rotate-45 bg-[#b4b4b4]"></i>';
      if (m === 'y') return '<i class="mx-auto block h-1 w-1 rotate-45 bg-[#ffff70]"></i>';
      if (m === 'g') return '<i class="mx-auto block h-1 w-1 bg-[#4f7a5c]"></i>';
      if (m === 'r') return '<i class="mx-auto block h-1 w-1 bg-[#c02828]"></i>';
      return '';
    };
    const sub = (s) => (s ? ` <span class="text-[9px] leading-none [font-family:'DejaVu_Sans_Condensed','Noto_Sans',sans-serif]">${s}</span>` : '');
    const pill = (s) => `<button class="block h-3 w-full rounded-full border border-[#999] text-[11px] leading-[10px]">${s}</button>`;

    function monitorRow(r, i, cols) {
      const [sym, suffix, m, last, chg, pct, dim, label] = r;
      const soft = dim ? 'opacity-65' : '';
      const lastCell = last === 'sub'
        ? `<td colspan="2" class="align-middle">${pill('Subscribe...')}</td>`
        : `<td>${mark(m)}</td><td class="pr-1 text-right"><span class="${soft}">${last}</span></td>`;
      const chgCell = cols > 3 ? (chg === 'del'
        ? `<td>${pill('Delayed')}</td>`
        : `<td class="${tone(chg, i % 2 === 0)} pr-1 text-right"><span class="${soft}">${chg}</span></td>`) : '';
      const pctCell = cols > 4 ? `<td class="${tone(chg, i % 2 === 0)} pr-1 text-right"><span class="${soft}">${pct}</span></td>` : '';
      return `<tr class="h-[15px] whitespace-nowrap ${stripe(i)}"><td class="${label || ''} overflow-hidden pl-[2px]">${sym}${sub(suffix)}</td>${lastCell}${chgCell}${pctCell}</tr>`;
    }
    const fill = (id, rows, cols) => { $(id).innerHTML = rows.map((r, i) => monitorRow(r, i, cols)).join(''); };

    fill('world', [
      ['SPX', 'INDEX', 'd', '2125.96', '-1.87', '', 1], ['NDX', 'INDEX', 'd', '4506.42', '+2.70', '', 1],
      ['TSX', 'INDEX', '', '15070.12', '-50.96', ''], ['Z', 'INDEX', 'd', '7008.44', '+13.34', '', 1],
      ['DAX', 'INDEX', 'd', '11848.47', '-4.86', '', 1], ['CAC40', 'INDEX', '', 'sub', 'del', ''],
    ], 4);
    fill('us', [
      ['SPX', 'INDEX', 'd', '2125.96', '-1.87', '-0.09%', 1], ['NDX', 'INDEX', 'd', '4506.42', '+2.70', '0.06%', 1],
      ['XLF', '', '', '24.89', '-0.09', '-0.36%'], ['XLE', '', '', '79.63', '+0.04', '0.05%'],
      ['XLU', '', '', '44.68', '+0.09', '0.20%'], ['XLB', '', '', '50.98', '-0.05', '-0.10%'],
    ], 5);
    fill('watch', [
      ['USO', "Jan'17 19 Straddle", '', '', '', ''], ['USO', '', 'g', '19.84', '+0.21', '1.07%'],
      ["USO Jan20'17 19 ...", '', 'd', 'c3.47', '', '', 1, 'bg-[#b8f4b8] text-black'],
      ["USO Jan20'17 19 ...", '', 'd', '2.76', '+0.05', '1.85%', 1, 'bg-[#ffc4c4] text-black'],
      ["ZS Aug14'15", '@ECB...', '', '931 1/2', '-6 1/2', '-0.69%'], ["GC Jun26'15", '@NY...', 'r', '1209.20', '+2.50', '0.21%'],
      ['DKS', '', 'r', '53.35', '-0.08', '-0.15%'], ["ADI Dec18'15 67....", '', 'd', 'c2.30', '', '', 1, 'bg-[#ffc4c4] text-black'],
    ], 5);
    fill('idx', [
      ['Z', 'INDEX', 'd', '7008.44', '', '', 1], ['DAX', 'INDEX', 'd', '11848.47', '', '', 1], ['CAC40', 'INDEX', '', 'sub'],
      ['SMI', 'INDEX', 'd', 'c9295.60', '', '', 1], ['EOE', 'INDEX', 'y', '501.90'], ['BFX', 'INDEX', 'y', '3752.00'],
      ['FTMIB', 'INDEX', 'y', '23770.00'], ['IBEX35', 'INDEX', 'y', 'c11497.7'], ['&nbsp;', '', '', ''],
    ], 3);
    // delayed quotes get an olive background
    [...$('idx').rows].slice(4, 8).forEach((tr, i) => {
      [...tr.cells].slice(1).forEach((td) => td.classList.add(i % 2 ? 'bg-[#1c1c00]' : 'bg-[#33331a]'));
    });

    // Option volume scanner
    const scan = [
      ['MU', 'g', '26.62', '1.18%', '66.9K', '76.5K', '0.26', '28.5%', '1.0%'], ['INTC', '', '33.37', '0.66%', '44.5K', '56.6K', '0.94', '17.6%', '-1.9%'],
      ['QCOM', 'r', '69.30', '-0.46%', '39.0K', '37.4K', '0.23', '16.4%', '-0.3%'], ['ADI', '', '66.18', '4.30%', '21.9K', '1.0K', '0.56', '19.1%', '-20.7%'],
      ['AMAT', 'g', '19.99', '0.00%', '18.1K', '30.5K', '0.34', '21.3%', '-2.2%'], ['TXN', 'g', '55.78', '0.00%', '15.0K', '5.1K', '0.19', '17.9%', '1.2%'],
      ['ALTR', '', '46.85', '0.00%', '12.7K', '27.5K', '3.13', '67.5%', '1.3%'], ['SWKS', '', '103.74', '-0.24%', '11.4K', '14.5K', '0.56', '29.5%', '-2.2%'],
      ['BRCM', '', '47.07', '-0.44%', '11.4K', '18.8K', '0.49', '24.7%', '2.6%'], ['AMBA', '', '83.58', '0.00%', '11.1K', '6.9K', '0.52', '45.6%', '2.7%'],
      ['CY', '', '13.66', '0.00%', '10.7K', '', '0.57', '33.1%', '6.4%'], ['NXPI', '', '102.88', '0.09%', '8.43K', '3.4K', '0.05', '27.5%', '-0.1%'],
      ['HIMX', '', '6.44', '4.72%', '8.11K', '6.7K', '0.07', '45.1%', '-0.3%'],
    ];
    $('scan').innerHTML = scan.map((r, i) => {
      const alt = i % 2 === 1;
      return `<tr class="h-[17px] ${stripe(i + 1)}"><td>${r[0]}</td><td>${mark(r[1])}</td><td class="pr-[3px] text-right">${r[2]}</td>
        <td class="${r[3] === '0.00%' ? '' : tone(r[3], alt)} pr-1 text-right">${r[3]}</td>
        ${r.slice(4, 8).map((v) => `<td class="pr-[3px] text-right">${v}</td>`).join('')}
        <td class="${tone(r[8], alt)} pr-1 text-right">${r[8]}</td></tr>`;
    }).join('') + '<tr class="h-[2px] bg-[#1b1b1b]"><td colspan="3"></td><td class="bg-[#1d4f1d]"></td><td colspan="4"></td><td class="bg-[#961b1f]"></td></tr>';

    // Portfolio
    const pf = [
      ['-710', 'AA', '14,200', '185,026', '13.94', 'r', '13.03', '-0.05'], ['1,059', 'AAL', '-800', '-34,584', '44.5541', 'g', '43.23', '-4.62'],
      ['11', 'AAPL', '-1,100', '-143,066', '119.9823', 'g', '130.06', '-0.01'], ['130', 'ABC', '1,000', '115,110', '114.98', 'g', '115.11', '0.00'],
      ['741', 'ALK', '-1,100', '-70,444', '64.7138', 'g', '64.04', '-2.95'], ['76', 'APNHY', '100', '2,130', '20.31', 'g', 'c20.63', ''],
    ];
    $('pf').innerHTML = `<tr class="h-[18px] font-bold"><td></td><td class="bg-[#860000] pr-1 text-right">-192,...</td>
      <td class="pl-[2px] text-[17px] leading-[18px] font-normal whitespace-nowrap [font-family:'DejaVu_Sans',sans-serif]">TOTAL Stocks</td>
      <td class="bg-[#860000] pr-1 text-right">-85,756</td><td class="bg-[#860000] pr-1 text-right">-8,781,...</td><td colspan="4"></td></tr>` +
      pf.map((r, i) => `<tr class="h-[15px] ${stripe(i)}"><td></td><td class="${tone(r[0])} pr-1 text-right">${r[0]}</td>
        <td class="text-[16px] leading-[15px]"><div class="flex h-[15px] items-center gap-[14px]">${r[1]}${r[1] === 'AAL' ? '<svg class="h-3 w-3" viewBox="0 0 12 12"><circle cx="6" cy="6" r="5.5" fill="#e87878"/><path d="M3 7q1 1.500 2 0T4 5q0-2 2 0M7 4l2 4M9.500 4 7 8" stroke="#fff" fill="none"/></svg>' : ''}</div></td>
        <td class="${tone(r[2])} pr-1 text-right">${r[2]}</td><td class="pr-1 text-right">${r[3]}</td><td class="pr-[3px] text-right">${r[4]}</td>
        <td class="pl-5">${mark(r[5])}</td><td class="pr-[3px] text-right">${r[6]}</td><td class="${r[7] === '0.00' ? '' : tone(r[7])} pr-1 text-right">${r[7]}</td></tr>`).join('');

    // Spread legs
    const x = '<span class="text-[#9a9a9a]">x</span>';
    const legs = [['Leg 1', 'Buy', '70', '0.38', `2.40 ${x} 2.70`, `897 ${x} 511`], ['Leg 2', 'Sell', '75', '0.22', `1.10 ${x} 1.35`, `437 ${x} 415`]];
    $('legs').innerHTML = legs.map((l, i) => {
      const rule = i ? 'border-b border-white' : '';
      return `<tr class="h-4"><td class="text-[11px] whitespace-nowrap text-[#8a8a8a]"><svg class="mr-[2px] inline h-2 w-2"><use href="#i-x"/></svg>${l[0]}</td>
        <td class="pl-[2px]">${l[1]}</td><td class="text-right">1</td><td class="pl-[7px]">DEC 18 '15</td><td class="pr-7 text-right">${l[2]}</td><td class="pl-[6px]">Call</td>
        <td class="${rule} text-right">${l[3]}</td><td class="px-[10px] text-center"><div class="${rule} h-4">${l[4]}</div></td><td><div class="${rule} h-4 text-center">${l[5]}</div></td></tr>`;
    }).join('') + `<tr class="h-4"><td></td><td colspan="5" class="bg-[#444] pl-[2px]">Dec 70/75 Bull Call</td><td class="bg-[#444] text-right">0.16</td>
      <td class="bg-[#444] text-center">1.05 ${x} 1.60</td><td class="bg-[#444] text-center">415 ${x} 437</td></tr>`;

    // ---- SVG helpers ----
    const line = (x1, y1, x2, y2, c, extra = '') => `<path d="M${x1} ${y1}L${x2} ${y2}" stroke="${c}" fill="none" ${extra}/>`;
    const rect = (x0, y0, w, h, c) => `<rect x="${x0}" y="${y0}" width="${w}" height="${h}" fill="${c}"/>`;
    const text = (x0, y0, s, c = '#fff', anchor = 'start', cls = '') => `<text x="${x0}" y="${y0}" fill="${c}" text-anchor="${anchor}" class="${cls}">${s}</text>`;

    function frame(f) {
      const { l, t, r, b, end, nav } = f;
      let s = line(l, t, r, t, '#555') + line(l, t, l, b, '#555') + line(l, b, r, b, '#999') + line(r, t, r, end, '#999');
      s += f.prices.map(([v, y]) => (v ? text(r + 6, y + 4, v) : '') + line(r, y, r + 3, y, '#999')).join('');
      s += f.dates.map(([v, x0]) => text(x0, b + 15, v, '#fff', 'middle') + line(x0, b, x0, b + 3, '#999')).join('');
      s += line(l, f.close, r, f.close, '#4c4c4c', 'stroke-dasharray="7 3"');
      // last price tag
      s += `<path d="M${r + 1} ${f.tag}l4-3v-3q0-1 1-1h32q2 0 2 2v10q0 2-2 2h-32q-1 0-1-1v-3z" fill="#ffff00"/>` + text(r + 6, f.tag + 4, '66.18', '#000');
      // value-axis slider
      const sx = l - 12;
      s += rect(sx, t, 9, f.slideEnd - t, '#1f1f1f') + rect(sx, f.h1, 9, f.h2 - f.h1, '#484848') + rect(sx, t, 9, 9, '#c8c8c8') + `<path d="M${sx + 2} ${t + 6}h5l-2.5-4z" fill="#111"/>`;
      [f.h1, f.h2].forEach((y) => { s += rect(sx, y - 2, 9, 1, '#fff') + rect(sx, y + 1, 9, 1, '#fff'); });
      if (f.down) s += rect(sx, f.slideEnd - 9, 9, 9, '#c8c8c8') + `<path d="M${sx + 2} ${f.slideEnd - 6}h5l-2.5 4z" fill="#111"/>`;
      const iy = f.slideEnd + 3;
      s += `<path d="M${sx + 4} ${iy}l3 3h-2v7h2l-3 3-3-3h2v-7h-2z" fill="#4a9ad8"/>` + line(sx + 6, iy + 6.5, sx + 9, iy + 6.5, '#3fae4a');
      [5, 9, 12, 10, 6].forEach((h, i) => { s += rect(sx + i * 2, iy + 30 - h, 1, h, '#c8c8c8'); });
      s += `<path d="M${sx + 2} ${iy + 37}q0-3 3-3t3 3v3" fill="none" stroke="#ddd" stroke-width="2"/>`;
      if (f.down) s += rect(sx, iy + 40, 9, 7, '#ddd') + rect(sx + 4, iy + 42, 1, 3, '#222');
      // history navigator
      s += rect(nav.x, nav.y, nav.w, 11, '#2a2a2a') + rect(nav.from, nav.y, nav.x + nav.w - nav.from, 11, '#3c3c3c') + rect(nav.x, nav.y, 9, 11, '#c8c8c8') + rect(nav.x + nav.w - 9, nav.y, 9, 11, '#c8c8c8');
      s += nav.labels.map(([v, x0]) => text(x0, nav.y + 9, v, '#8c8c8c', 'start', "text-[10px] [font-family:'Liberation_Serif',serif]")).join('');
      s += rect(nav.from - 1, nav.y, 1, 11, '#fff') + rect(nav.from + 1, nav.y, 1, 11, '#fff') + rect(nav.x + nav.w - 12, nav.y, 1, 11, '#fff');
      s += `<path d="M${nav.x + 6} ${nav.y + 2}v7l-4-3.5zM${nav.x + nav.w - 6} ${nav.y + 2}v7l4-3.5z" fill="#111"/>`;
      s += `<path d="M${r + 3} ${end - 10}l4-4v3h2v2h-2v3z" fill="#999"/>`;
      return s;
    }

    // 1 week candles: colour, body top/bottom, wick top/bottom in thirds of a pixel
    const GREEN = '#0aa30a', RED = '#d00808';
    const week = `r609,614,594,628 r616,621,605,624 g613,618,612,629 g610,613,605,618 g606,611,605,616 g603,607,600,611 g601,606,598,609 g598,603,597,606
      g592,596,591,600 g585,590,582,594 r582,588,580,594 g561,587,560,594 r561,578,552,582 r546,584,543,594 r588,597,584,606 g599,603,591,608
      r598,609,597,611 g606,611,603,612 g598,604,597,608 r598,602,597,606 r600,605,597,612 g604,608,603,613 r604,608,603,611 g601,606,597,611
      g595,600,593,602 g594,599,576,600 g582,591,567,606 r582,590,579,600 r592,597,586,601 r597,602,588,603 g573,597,570,600 r573,578,570,585
      g576,581,573,586 g573,578,567,582 g565,570,564,574 r564,572,558,579 y573,578,567,579 g570,576,564,579 r570,581,564,585 g528,551,516,567
      r525,540,522,551 r540,551,538,558 g546,551,545,560 g538,545,537,556 r537,545,534,552 r545,550,538,552 r545,551,541,555 g537,548,534,552
      r537,541,534,546 r541,558,540,563 r558,580,557,588 g576,581,567,585 g417,524,405,543 g381,420,372,423 r381,386,366,423 r390,417,384,429
      r417,422,415,440 g404,417,390,420 g392,404,390,411 r392,401,390,411 g390,401,387,405 g352,387,350,393 r350,369,347,390 r370,378,367,417 r378,392,377,402`.split(/\s+/);
    const weekDays = [['May 15', 1040.5], ['May 18', 1145.5], ['May 19', 1249.5], ['May 20', 1354.5]];
    $('weekChart').innerHTML = frame({
      l: 936.5, t: 103.5, r: 1458.5, b: 221.5, end: 243, close: 192.5, tag: 131, slideEnd: 203, h1: 146, h2: 178,
      prices: [['67.00', 113], ['', 135], ['65.00', 158], ['64.00', 180], ['63.00', 202]], dates: weekDays,
      nav: { x: 921, y: 246, w: 582, from: 1451, labels: [["'Feb 23", 963], ["'Mar 9", 1049], ["'Mar 23", 1133], ["'Apr 6", 1218], ["'Apr 20", 1302], ["'May 4", 1386], ["'May", 1471]] },
    }) + weekDays.map(([, d]) => line(d, 104, d, 221, '#555', 'stroke-dasharray="7 3"')).join('') +
      week.map((c, i) => {
        const [a, b, wt, wb] = c.slice(1).split(',').map((v) => v / 3);
        const cx = 940.5 + i * 8.04;
        return line(cx, wt, cx, wb, '#ddd') + rect(cx - 2.5, a, 5, b - a, { g: GREEN, r: RED, y: '#eeee20' }[c[0]]);
      }).join('');

    // 1 month bars: colour, x, high, low, open, close
    const month = [
      ['g', 88, 489, 594, 543, 513], ['r', 150, 462, 608, 468, 498], ['g', 210, 585, 725, 690, 618], ['r', 273, 612, 851, 618, 759], ['g', 336, 657, 828, 822, 741],
      ['g', 398, 633, 765, 744, 666], ['r', 458, 606, 792, 690, 720], ['r', 521, 738, 927, 756, 849], ['g', 584, 618, 786, 780, 660], ['r', 644, 573, 678, 633, 663],
      ['r', 707, 687, 870, 693, 861], ['r', 769, 789, 930, 819, 877], ['g', 832, 744, 888, 849, 825], ['r', 892, 633, 780, 729, 732], ['r', 955, 693, 747, 729, 741],
      ['r', 1018, 759, 885, 798, 819], ['r', 1080, 711, 828, 795, 798], ['g', 1140, 582, 738, 700, 642], ['r', 1203, 570, 705, 576, 672], ['g', 1266, 597, 696, 666, 648],
      ['r', 1326, 513, 660, 588, 636], ['g', 1389, 180, 567, 537, 272],
    ];
    const monthPrices = [164, 231, 298, 364, 430, 497, 563, 630, 695, 762, 830, 896].map((y, i) => [(67 - i / 2).toFixed(2), Math.round(260 + y / 3)]);
    $('monthChart').innerHTML = frame({
      l: 936.5, t: 300.5, r: 1458.5, b: 590.5, end: 611, close: 471.5, tag: 351, slideEnd: 540, h1: 383, h2: 455, down: true,
      prices: monthPrices.concat([['', 580]]), dates: [['Apr 28', 1054.5], ['May 5', 1173.5], ['May 12', 1291.5], ['May 19', 1410.5]],
      nav: { x: 921, y: 615, w: 582, from: 1306, labels: [["'Feb 23", 964], ["'Mar 9", 1049], ["'Mar 23", 1135], ["'Apr 6", 1221], ["'Apr 20", 1307], ["'May 4", 1392], ["'Ma", 1478]] },
    }) + month.map(([c, bx, hi, lo, o, cl]) => {
      const cx = Math.round(915 + bx / 2.613), y = (v) => Math.round(260 + v / 3), col = c === 'g' ? GREEN : RED;
      return rect(cx - 4, y(hi), 9, y(lo) - y(hi), col) + rect(cx - 8, y(o) - 1, 4, 2, col) + rect(cx + 5, y(cl) - 1, 4, 2, col);
    }).join('');

    // 1 year bars, interpolated between turning points (x, mid y)
    const turns = `27,866 37,858 48,862 60,861 65,856 66,838 70,834 85,834 100,843 110,852 118,848 124,844 133,842 147,845 160,855 168,850 171,863 175,873 180,880 186,875 197,884 204,883 209,887 215,883
      228,871 238,865 246,860 251,864 254,871 260,872 268,877 285,883 295,891 302,883 307,880 315,884 330,883 334,890 339,900 346,902 350,910 355,906 357,933 365,935 372,930 376,920 382,910 390,909 405,908
      408,886 415,884 430,880 445,879 455,873 465,866 468,853 475,842 482,832 488,824 495,831 502,826 508,831 515,838 520,825 528,821 535,826 545,832 550,836 556,848 565,843 572,845 577,850 582,855 587,846
      597,844 605,853 612,859 616,864 620,852 630,838 638,836 650,818 655,810 665,808 675,805 682,805 690,810 698,815 706,820 710,822 720,810 728,795 732,792 736,797 738,813 741,823 744,815 746,769 752,773
      758,775 764,775 770,768 777,763 780,770 786,767 795,764 801,762 806,772 812,773 820,778 826,768 831,777 835,780 841,772 848,779 855,770 864,765`.split(/\s+/).map((p) => p.split(',').map(Number));
    let year = '', seed = 7, prev = 866;
    const rnd = () => { seed = (seed * 16807) % 2147483647; return seed / 2147483647; };
    for (let px = 27; px <= 864; px += 3.3) {
      const k = Math.max(1, turns.findIndex(([tx]) => tx >= px));
      const [x0, y0] = turns[k - 1], [x1, y1] = turns[k];
      const mid = y0 + ((y1 - y0) * (px - x0)) / (x1 - x0) + (rnd() - 0.5) * 2;
      const busy = px > 340 && px < 380 || px > 480;
      const half = Math.min(9, 1.5 + rnd() * (busy ? 4 : 2) + Math.abs(mid - prev) * 0.5);
      const col = mid > prev ? '#d81414' : '#18a01c';
      year += rect(px.toFixed(1), (mid - half).toFixed(1), 1.8, (half * 2).toFixed(1), col) + rect((px - 1).toFixed(1), (mid + half / 3).toFixed(1), 3.4, 1, col);
      prev = mid;
    }
    $('yearChart').innerHTML = frame({
      l: 25.5, t: 717.5, r: 869.5, b: 962.5, end: 984, close: 768.5, tag: 746, slideEnd: 911, h1: 785, h2: 842, down: true,
      prices: [67.5, 65, 62.5, 60, 57.5, 55, 52.5, 50, 47.5, 45, 42.5].map((v, i) => [v.toFixed(2), 735 + i * 21]),
      dates: [["Jun '14", 48], ["Jul '14", 118], ["Aug '14", 192], ["Sep '14", 262], ["Oct '14", 333], ["Nov '14", 410], ["Dec '14", 473], ["Jan '15", 547], ["Feb '15", 614], ["Mar '15", 678], ["Apr '15", 751], ["May '15", 822]],
      nav: { x: 10, y: 987, w: 905, from: 470, labels: [["May '13", 21], ["'Aug '13", 135], ["'Nov '13", 250], ["'Feb '14", 363], ["'May '14", 477], ["'Aug '14", 591], ["'Nov '14", 701], ["'Mar '15", 809]] },
    }) + year + rect(866, 740, 2, 24, '#18a01c') + rect(276, 879, 4, 3, '#ffe040') +
      `<path d="M30 723l5 5M35 723l-5 5" stroke="#7a3038" stroke-width="1.5"/>` +
      text(38, 730, 'L: 66.18 CH: +2.73 CH%: 4.30%', '#fff', 'start', "text-[11px] [font-family:'Liberation_Sans',sans-serif]");

    // Scanner side chart
    const iv = [264, 180, 171, 192, 210, 184, 546, 270, 234, 393, 297, 256, 387];
    const vol = [546, 387, 345, 216, 186, 162, 147, 135, 135, 135, 132, 114, 111];
    const trace = (pts, endX, c) => {
      const p = pts.map((v, i) => [v / 3, 437 + i * 17]);
      return `<polyline points="${p.concat([[endX / 3, 651]]).join(' ')}" fill="none" stroke="${c}" stroke-width="1.2"/>` + p.map(([a, b]) => `<circle cx="${a}" cy="${b}" r="2.2" fill="${c}"/>`).join('');
    };
    let side = '';
    for (let i = 1; i < 13; i += 2) side += rect(16, 428 + i * 17, 168, 17, '#1b1b1b');
    side += rect(16, 649, 168, 2, '#1b1b1b') + line(15.5, 428, 15.5, 651, '#555') + line(175.5, 428, 175.5, 651, '#555', 'stroke-dasharray="2 2"') + line(185.5, 425, 185.5, 675, '#777');
    side += trace(iv, 375, '#e0862a') + trace(vol, 103, '#dede20');
    side += [['0', 15], ['15.87', 55], ['31.75', 95], ['47.62', 135]].map(([v, a]) => text(a, 668, v, '#808080', 'middle')).join('');
    $('scanChart').innerHTML = side;

    // Open interest: stacked bars, [x, top, [colour, bottom]...]
    const B = '#5c5cc8', Y = '#f4f050', R = '#c82020', M = '#b428b4', T = '#30c8c8', W = '#e0d4bc', G = '#2a9a38';
    const oi = [
      [762, 226, B, 272, G, 305, R, 338, Y, 458, T, 467, W, 574], [813, 354, B, 365, R, 436, Y, 574], [864, 264, M, 274, B, 304, R, 449, Y, 574],
      [915, 237, B, 255, R, 442, Y, 574], [966, 306, B, 328, R, 365, Y, 574], [996, 433, B, 463, Y, 574], [660, 430, B, 442, G, 454, R, 495, W, 506, Y, 574],
      [711, 486, B, 502, Y, 574], [977, 498, B, 508, R, 514, Y, 574], [609, 526, B, 531, R, 537, Y, 574], [558, 522, B, 538, R, 545, Y, 574],
      [506, 534, B, 540, R, 550, Y, 574], [475, 520, M, 532, B, 553, R, 567, Y, 574], [464, 556, Y, 574], [322, 547, M, 557, B, 567, M, 574], [373, 540, B, 574],
      [424, 543, B, 566, Y, 574], [393, 552, B, 574], [342, 556, B, 574], [353, 565, Y, 574], [271, 556, B, 574], [291, 564, B, 574], [445, 558, B, 574],
      [200, 568, B, 574], [210, 569, Y, 574], [220, 565, B, 574], [250, 568, B, 574], [548, 566, T, 574], [618, 560, W, 574], [639, 558, T, 574], [670, 566, Y, 574],
      [682, 569, W, 574], [692, 568, W, 574], [701, 564, Y, 574], [720, 549, Y, 574], [730, 565, T, 574], [741, 543, T, 556, W, 574], [751, 562, W, 574], [782, 553, T, 574],
      [824, 560, W, 574], [885, 569, W, 574], [904, 558, Y, 574], [987, 541, B, 560, R, 574], [1007, 543, M, 553, R, 574], [1017, 545, R, 566, Y, 574], [1028, 562, M, 574], [1038, 568, M, 574],
    ];
    const ox = (v) => Math.round(1500 + v / 3) + 0.5, oy = (v) => Math.round(255 + v / 3) + 0.5;
    let out = [178, 262, 344, 424, 506, 586, 670, 751, 832, 913, 997, 1078].map((v) => line(ox(v), 305, ox(v), 449, '#5a5a5a', 'stroke-dasharray="3 2"')).join('');
    out += [175, 242, 308, 374, 442, 508, 574].map((v, i) => line(1544, oy(v), 1862, oy(v), i === 6 ? '#999' : '#5a5a5a', i === 6 ? '' : 'stroke-dasharray="3 2"') + text(1868, oy(v) + 4, i === 6 ? '0' : `${60 - i * 10}K`, '#c8c8c8')).join('');
    out += line(1543.5, 304.5, 1862.5, 304.5, '#666') + line(1543.5, 304.5, 1543.5, 446, '#666') + line(1862.5, 304.5, 1862.5, 446, '#999');
    oi.forEach(([bx, top, ...seg]) => {
      let y = top;
      out += rect(1500 + bx / 3 - 2.3, 255 + top / 3 - 0.7, 4.6, (574 - top) / 3 + 0.7, '#8a8a8a');
      for (let i = 0; i < seg.length; i += 2) {
        out += rect(1500 + bx / 3 - 1.4, 255 + y / 3, 2.8, (seg[i + 1] - y) / 3, seg[i]);
        y = seg[i + 1];
      }
    });
    out += text(1544, 462, 'Strike:', '#c8c8c8') + text(1655, 462, '52', '#c8c8c8');
    out += [['37', 1614], ['45', 1641], ['60.5', 1723], ['68.5', 1778], ['85', 1832]].map(([v, a]) => text(a, 462, v, '#c8c8c8', 'middle')).join('');
    out += `<path d="M1681 451l3-4 3 4h16v14h-38v-14z" fill="#8c8c8c"/>` + text(1684, 462, '54.75', '#222', 'middle');
    out += `<text transform="translate(1537 376) rotate(-90)" text-anchor="middle" fill="#fff" class="text-[13px] font-bold [font-family:'DejaVu_Sans_Condensed','Noto_Sans',sans-serif]">Puts + Calls</text>`;
    $('oiChart').innerHTML = out;
  </script>
</body>
</html>
